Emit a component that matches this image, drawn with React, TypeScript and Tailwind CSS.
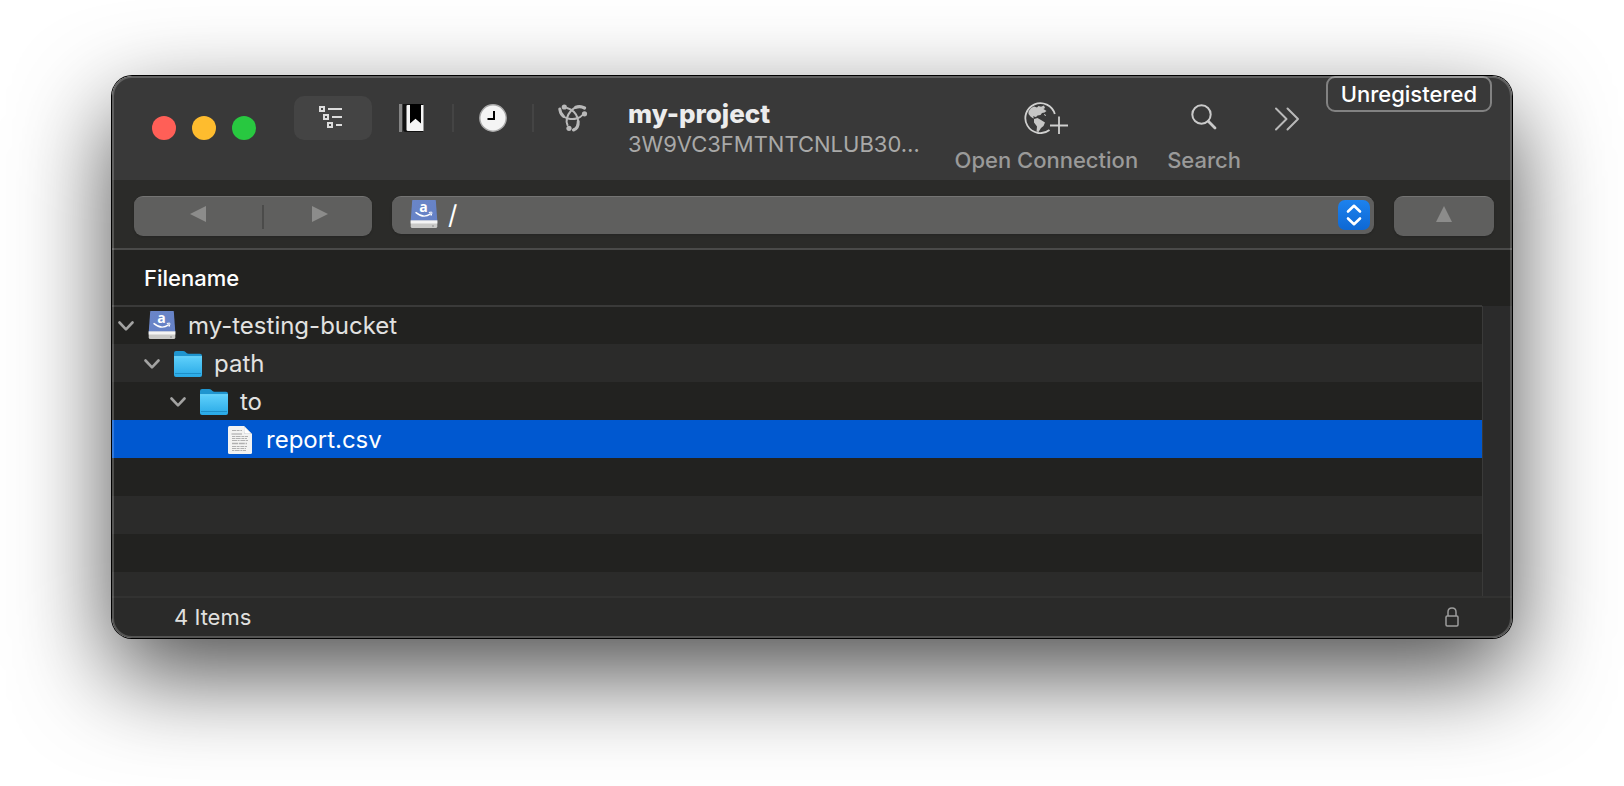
import React from 'react';
import { clsx } from 'clsx';

type Kind = 'drive' | 'folder' | 'file';

interface Entry {
  name: string;
  kind: Kind;
  indent: string;
  selected?: boolean;
}

const entries: Entry[] = [
  { name: 'my-testing-bucket', kind: 'drive', indent: 'pl-[6px]' },
  { name: 'path', kind: 'folder', indent: 'pl-[32px]' },
  { name: 'to', kind: 'folder', indent: 'pl-[58px]' },
  { name: 'report.csv', kind: 'file', indent: 'pl-[84px]', selected: true },
];

const emptyRows = ['h-[38px]', 'h-[38px]', 'h-[38px]', 'h-[24px]'];

function DriveIcon() {
  return (
    <svg width="28" height="30" viewBox="0 0 28 30" aria-hidden="true" className="shrink-0 overflow-visible">
      <defs>
        <linearGradient id="drive-top" x1="0" y1="0" x2="1" y2="1">
          <stop offset="0" stopColor="#6a86c8" />
          <stop offset="1" stopColor="#6581c6" />
        </linearGradient>
      </defs>
      <path d="M2.200 .5Q2.300 0 3 0H25Q25.700 0 25.800 .5L27.300 21H.7Z" fill="url(#drive-top)" />
      <path d="M.7 20.500H27.300V26.500Q27.300 28 25.500 28H2.500Q.7 28 .7 26.500Z" fill="#c9c9c7" />
      <path d="M.7 20.500H27.300V23.500H.7Z" fill="#f4f4f4" />
      <circle cx="23" cy="26" r=".7" fill="#777" />
      <text x="13.500" y="12" textAnchor="middle" fontSize="14" fontWeight="700" fontFamily="Open Sans, sans-serif" fill="#fff">a</text>
      <path d="M6 12.600Q13.500 18.900 20.500 13.900" fill="none" stroke="#fff" strokeWidth="1.400" strokeLinecap="round" />
      <path d="M19.200 12.400Q22 11.700 22 12.500T21.200 15.400" fill="none" stroke="#fff" strokeWidth="1" strokeLinecap="round" />
    </svg>
  );
}

function FolderIcon() {
  return (
    <svg width="28" height="28" viewBox="0 0 28 28" aria-hidden="true" className="shrink-0">
      <defs>
        <linearGradient id="folder-front" x1="0" y1="0" x2="0" y2="1">
          <stop offset="0" stopColor="#5fd0fb" />
          <stop offset="1" stopColor="#28a9e6" />
        </linearGradient>
      </defs>
      <path d="M0 3Q0 1 2 1H9Q10.500 1 11.500 2L12.500 3Q13.300 3.700 14.500 3.700H26Q28 3.700 28 5.700V9H0Z" fill="#1f95cf" />
      <path d="M0 6.500H28V25Q28 27 26 27H2Q0 27 0 25Z" fill="url(#folder-front)" />
      <path d="M0 6.700H28" stroke="#7adcff" strokeWidth=".8" />
      <path d="M1 23.500H27" stroke="#1d8fc8" strokeWidth="1" />
    </svg>
  );
}

function FileIcon() {
  return (
    <svg width="28" height="28" viewBox="0 0 28 28" aria-hidden="true" className="shrink-0">
      <path d="M2 1.500Q2 0 3.500 0H18L26 8V26.500Q26 28 24.500 28H3.500Q2 28 2 26.500Z" fill="#f3f3f2" />
      <path d="M18 0L26 8H19.500Q18 8 18 6.500Z" fill="#c9cbd0" />
      <path d="M18.400 1L25 7.600H20Q18.400 7.600 18.400 6Z" fill="#fff" />
      <g stroke="#b0b0b0" strokeWidth="1.200">
        <path d="M6 4.500H16" strokeDasharray="4 .6 3 .8" />
        <path d="M5.500 8H16" />
        <path d="M6 10.500H22M6 12.500H21" strokeDasharray="3 .6 5 .8" />
        <path d="M6 14.500H22" strokeDasharray="5 .6 2 .8" />
        <path d="M6 17.500H21" strokeDasharray="6 .8" strokeWidth="1.400" />
        <path d="M6 20.500H21M6 22.500H20" strokeDasharray="4 .6 3 .8" />
        <path d="M6 24.500H20" strokeDasharray="2 .6 5 .8" />
      </g>
    </svg>
  );
}

function Chevron() {
  return (
    <svg width="16" height="10" viewBox="0 0 16 10" aria-hidden="true">
      <path d="M1.500 1.500L8 8.300L14.500 1.500" fill="none" stroke="#a3a3a2" strokeWidth="2.600" strokeLinecap="round" strokeLinejoin="round" />
    </svg>
  );
}

function OutlineIcon() {
  return (
    <svg width="24" height="24" viewBox="0 0 24 24" aria-hidden="true" fill="none" stroke="#dcdcdc" strokeWidth="2">
      <path d="M1 2H5V6H1ZM5 10H9V14H5ZM9 18H13V22H9Z" />
      <path d="M9 4H23M13 12H23M17 20H23" />
    </svg>
  );
}

function BookmarkIcon() {
  return (
    <svg width="26" height="28" viewBox="0 0 26 28" aria-hidden="true">
      <path d="M0 0H3V28H0Z" fill="#858585" />
      <path d="M4 0H24V28H7Q4 28 4 25Z" fill="#111" />
      <path d="M7.500 2Q7.500 1 8.500 1H24.500V27H9Q7.500 27 7.500 25.500Z" fill="#f5f5f5" />
      <path d="M11 0H22V19.500L16.500 14.800L11 19.500Z" fill="#000" />
    </svg>
  );
}

function ClockIcon() {
  return (
    <svg width="28" height="28" viewBox="0 0 28 28" aria-hidden="true">
      <circle cx="14" cy="14" r="13.200" fill="#f4f4f4" stroke="#a8a8a8" strokeWidth="1.400" />
      <path d="M15 7V15H8.500" fill="none" stroke="#000" strokeWidth="2" />
    </svg>
  );
}

function BonjourIcon() {
  return (
    <svg width="30" height="28" viewBox="0 0 30 28" aria-hidden="true" fill="none" stroke="#b9b9b9" strokeLinecap="round">
      <path d="M1.800 5C2 9.500 5 13.500 11 14.800C17 16 22.500 13.500 24.500 11" strokeWidth="2" />
      <path d="M1.800 5C2 8 3.300 10.500 5.500 12.300" strokeWidth="3" />
      <path d="M26.500 4C22 1 16.500 2.500 12.800 7C9 11.500 7.800 17 9.500 21" strokeWidth="2" />
      <path d="M26.500 4C23.500 2.300 20.500 2.300 17.800 3.300" strokeWidth="3.200" />
      <path d="M9 4C14 5 18.500 9.500 19.800 14.500C21 20 19 24.500 15.500 26" strokeWidth="2" />
      <path d="M20.200 17.500C20.500 21.500 18.500 24.800 15.500 26" strokeWidth="3" />
      <g fill="#b9b9b9" stroke="none">
        <circle cx="6.300" cy="3" r="2.600" />
        <circle cx="26.500" cy="9.800" r="2.600" />
        <circle cx="11" cy="24.300" r="2.600" />
      </g>
    </svg>
  );
}

function GlobePlusIcon() {
  return (
    <svg width="44" height="32" viewBox="0 0 44 32" aria-hidden="true">
      <path d="M25.500 28A15 15 0 1 1 30.800 12" fill="none" stroke="#d0d0cf" strokeWidth="1.800" />
      <path d="M4.500 9.500L7 6L10 4.500L13 5.500L14.500 4L17 4.800L20 3.500L21 6L19.500 7L22.500 9L20.500 10.500L18 11L16.500 13L13.500 13.500L12 15L9 14.300L10 16.500L8.500 16L6.500 14.500L4.500 12Z" fill="#c6c6c5" />
      <path d="M10 17L13.500 16L17 18L21 20.500L19.500 24L17 26L14.500 30L12.500 29.500L13 24.500L10 20.500Z" fill="#c6c6c5" />
      <path d="M20 12.500L22 13.500" stroke="#c6c6c5" strokeWidth="1" />
      <path d="M26 23.500H44M35 14.500V32" stroke="#d0d0cf" strokeWidth="1.800" />
    </svg>
  );
}

function SearchIcon() {
  return (
    <svg width="26" height="26" viewBox="0 0 26 26" aria-hidden="true" fill="none" stroke="#cacaca">
      <circle cx="10.500" cy="10.500" r="9.200" strokeWidth="2" />
      <path d="M17.300 17.300L24 24" strokeWidth="2.800" strokeLinecap="round" />
    </svg>
  );
}

function LockIcon() {
  return (
    <svg width="14" height="20" viewBox="0 0 14 20" aria-hidden="true" fill="none" stroke="#9d9d9c" strokeWidth="1.500">
      <rect x="1" y="9" width="12" height="10" rx="1.200" />
      <path d="M3 9V5C3 2.500 4.700 1 7 1S11 2.500 11 5V9" />
    </svg>
  );
}

const icons: Record<Kind, () => React.ReactElement> = {
  drive: DriveIcon,
  folder: FolderIcon,
  file: FileIcon,
};

function TitleBar() {
  return (
    <header className="relative flex h-[104px] items-start bg-[#393939] pl-10">
      <div className="mt-10 flex gap-4">
        <button aria-label="Close" className="size-6 rounded-full bg-[#ff5f57]" />
        <button aria-label="Minimize" className="size-6 rounded-full bg-[#febc2e]" />
        <button aria-label="Zoom" className="size-6 rounded-full bg-[#28c840]" />
      </div>

      <div className="mt-5 ml-[38px] flex h-11 items-center">
        <button aria-label="Outline" className="flex h-11 w-[78px] items-center justify-center rounded-[10px] bg-[#444444] pr-1 pb-[2px]">
          <OutlineIcon />
        </button>
        <button aria-label="Bookmarks" className="ml-[27px]">
          <BookmarkIcon />
        </button>
        <span className="ml-[27px] h-7 w-[2px] bg-[#444444]" />
        <button aria-label="History" className="ml-[25px]">
          <ClockIcon />
        </button>
        <span className="ml-[25px] h-7 w-[2px] bg-[#444444]" />
        <button aria-label="Bonjour" className="ml-6">
          <BonjourIcon />
        </button>
      </div>

      <div className="mt-[22px] ml-10 w-[300px] shrink-0">
        <h1 className="text-[26px] leading-8 font-extrabold text-[#ececec]">my-project</h1>
        <p className="text-[22px] leading-7 text-[#a9a9a8]">3W9VC3FMTNTCNLUB30…</p>
      </div>

      <div className="mr-[212px] ml-auto flex gap-[29px] pt-[26px] text-[22px] leading-7 font-medium text-[#9a9a99]">
        <button className="flex flex-col items-center whitespace-nowrap">
          <span className="flex h-11 items-start">
            <GlobePlusIcon />
          </span>
          Open Connection
        </button>
        <button className="flex flex-col items-center">
          <span className="flex h-11 items-start pt-[2px]">
            <SearchIcon />
          </span>
          Search
        </button>
        <button aria-label="More" className="mt-[5px] ml-1 self-start">
          <svg width="26" height="24" viewBox="0 0 26 24" aria-hidden="true" fill="none" stroke="#b9b9b9" strokeWidth="2" strokeLinecap="round" strokeLinejoin="round">
            <path d="M2 1.500L12.500 12L2 22.500M13.500 1.500L24 12L13.500 22.500" />
          </svg>
        </button>
      </div>

      <button className="absolute top-0 right-5 h-9 rounded-[9px] border-2 border-[#828282] bg-[#393939] px-[13px] text-[22px] leading-8 font-medium text-white">
        Unregistered
      </button>
    </header>
  );
}

function PathBar() {
  return (
    <nav className="flex h-[70px] items-start gap-5 border-b-2 border-[#4a4a49] bg-[#2b2b29] px-[18px] pt-4 pl-[22px]">
      <div className="flex h-10 w-[238px] shrink-0 items-center rounded-[9px] border-t border-[#747473] bg-[#5f5f5e] shadow-sm">
        <button aria-label="Back" className="flex h-full w-32 items-center justify-center pb-[6px]">
          <svg width="16" height="16" viewBox="0 0 16 16" aria-hidden="true"><path d="M0 8L16 0V16Z" fill="#8c8c8b" /></svg>
        </button>
        <span className="h-6 w-[2px] bg-[#4b4b4a]" />
        <button aria-label="Forward" className="flex h-full flex-1 items-center justify-center pb-[6px] pl-1">
          <svg width="16" height="16" viewBox="0 0 16 16" aria-hidden="true"><path d="M16 8L0 0V16Z" fill="#8c8c8b" /></svg>
        </button>
      </div>

      <div className="relative h-[38px] flex-1">
        <select aria-label="Path" className="h-full w-full appearance-none rounded-[9px] border-t border-[#747473] bg-[#5f5f5e] pb-[2px] pl-[56px] text-[26px] leading-8 text-white shadow-sm outline-none">
          <option>/</option>
        </select>
        <span className="pointer-events-none absolute top-1 left-[18px]">
          <DriveIcon />
        </span>
        <span className="pointer-events-none absolute top-1 right-1 flex h-[30px] w-8 items-center justify-center rounded-[7px] bg-linear-to-b from-[#1d82ee] to-[#0e68d4]">
          <svg width="16" height="22" viewBox="0 0 16 22" aria-hidden="true" fill="none" stroke="#fff" strokeWidth="2.600" strokeLinecap="round" strokeLinejoin="round">
            <path d="M2 7.500L8 1.800L14 7.500M2 14.500L8 20.200L14 14.500" />
          </svg>
        </span>
      </div>

      <button aria-label="Parent folder" className="flex h-10 w-[100px] shrink-0 items-center justify-center rounded-[9px] border-t border-[#747473] bg-[#5f5f5e] pb-[6px] shadow-sm">
        <svg width="16" height="16" viewBox="0 0 16 16" aria-hidden="true"><path d="M8 0L16 16H0Z" fill="#8c8c8b" /></svg>
      </button>
    </nav>
  );
}

function FileRow({ entry }: { entry: Entry }) {
  const Icon = icons[entry.kind];
  return (
    <tr className={clsx('h-[38px]', entry.selected ? 'bg-[#0058d0] text-white' : 'odd:bg-[#222220] even:bg-[#2b2b2a]')}>
      <td className="p-0">
        <div className={clsx('flex items-center pt-px', entry.indent)}>
          <span className="flex w-[30px] shrink-0">
            {entry.kind !== 'file' && (
              <button aria-label={`Collapse ${entry.name}`}>
                <Chevron />
              </button>
            )}
          </span>
          <Icon />
          <span className="ml-3 text-[24px] leading-8">{entry.name}</span>
        </div>
      </td>
    </tr>
  );
}

function FileList() {
  return (
    <main className="flex bg-[#222220]">
      <table className="flex-1 border-collapse text-[#e2e2e1]">
        <thead>
          <tr className="h-14 border-b-2 border-[#3a3a39]">
            <th className="w-full p-0 pl-8 text-left text-[22px] leading-8 font-medium text-white">Filename</th>
          </tr>
        </thead>
        <tbody>
          {entries.map((entry) => (
            <FileRow key={entry.name} entry={entry} />
          ))}
          {emptyRows.map((height, i) => (
            <tr key={i} className={clsx(height, 'odd:bg-[#222220] even:bg-[#2b2b2a]')}>
              <td className="p-0" />
            </tr>
          ))}
        </tbody>
      </table>
      <div className="mt-14 w-[30px] border-l border-[#3a3a39] bg-[#2b2b2b]" />
    </main>
  );
}

export default function App() {
  return (
    <div className="min-h-screen overflow-hidden bg-white px-28 pt-[76px] pb-[148px] font-['Inter',sans-serif]">
      <div className="relative rounded-[20px] shadow-[0_0_0_1px_#000,0_36px_96px_rgba(0,0,0,0.7)]">
        <div className="overflow-hidden rounded-[20px]">
          <TitleBar />
          <PathBar />
          <FileList />
          <footer className="flex h-[42px] items-center justify-between border-t-2 border-[#323231] bg-[#2a2a29] pr-[53px] pb-[2px] pl-[62px]">
            <span className="text-[22px] leading-8 text-[#e0e0df]">4 Items</span>
            <LockIcon />
          </footer>
        </div>
        <div className="pointer-events-none absolute inset-0 rounded-[20px] border-2 border-white/20" />
      </div>
    </div>
  );
}
